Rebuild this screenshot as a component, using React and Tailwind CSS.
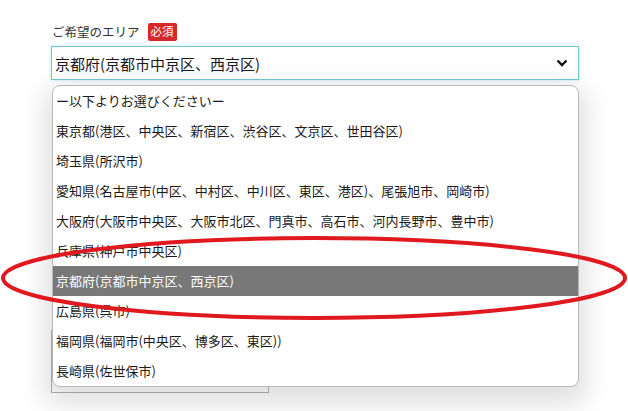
import React from "react";

const items = [
  "ー以下よりお選びくださいー",
  "東京都(港区、中央区、新宿区、渋谷区、文京区、世田谷区)",
  "埼玉県(所沢市)",
  "愛知県(名古屋市(中区、中村区、中川区、東区、港区)、尾張旭市、岡崎市)",
  "大阪府(大阪市中央区、大阪市北区、門真市、高石市、河内長野市、豊中市)",
  "兵庫県(神戸市中央区)",
  "京都府(京都市中京区、西京区)",
  "広島県(呉市)",
  "福岡県(福岡市(中央区、博多区、東区))",
  "長崎県(佐世保市)",
];

export default function App() {
  return (
    <div
      className="relative w-[628px] h-[411px] overflow-hidden bg-white pl-[51px] pt-[23px] text-[#1a1a1a]"
      style={{ fontFamily: '"Noto Sans CJK JP", "Noto Sans", sans-serif' }}
    >
      <div className="flex items-center h-[18px] gap-[8px]">
        <span className="text-[12.5px] leading-none text-[#333] pl-[1px]">ご希望のエリア</span>
        <span className="bg-[#d6282b] text-white text-[11.5px] leading-none h-[18px] px-[3px] flex items-center rounded-[2px]">
          必須
        </span>
      </div>
      <div className="mt-[5px] w-[528px] h-[34px] border border-[#72c9d2] shadow-[0_0_3px_rgba(114,201,210,0.5)] flex items-center justify-between pl-[3px] pr-[10px] bg-white">
        <span className="text-[15px] leading-none">京都府(京都市中京区、西京区)</span>
        <svg width="12" height="8" viewBox="0 0 12 8">
          <polyline points="1.5,1.5 6,6 10.5,1.5" fill="none" stroke="#111" strokeWidth="2.4" />
        </svg>
      </div>
      <div className="mt-[250px] w-[218px] h-[63px] border border-[#b4b4b4]" />

      <div className="absolute left-[52px] top-[85px] w-[527px] border border-[#b8b8b8] rounded-[8px] bg-white overflow-hidden shadow-[0_10px_26px_8px_rgba(0,0,0,0.12)]">
        {items.map((t, i) => (
          <div
            key={i}
            className={
              "h-[30px] flex items-center pl-[3px] pb-[1px] text-[13px] leading-none " +
              (i === 6 ? "bg-[#787878] text-white" : "text-[#1a1a1a]")
            }
          >
            {t}
          </div>
        ))}
      </div>

      <svg className="absolute left-0 top-0 pointer-events-none" width="628" height="411">
        <ellipse cx="314" cy="278" rx="311" ry="40" fill="none" stroke="#e0191f" strokeWidth="4" />
      </svg>
    </div>
  );
}
